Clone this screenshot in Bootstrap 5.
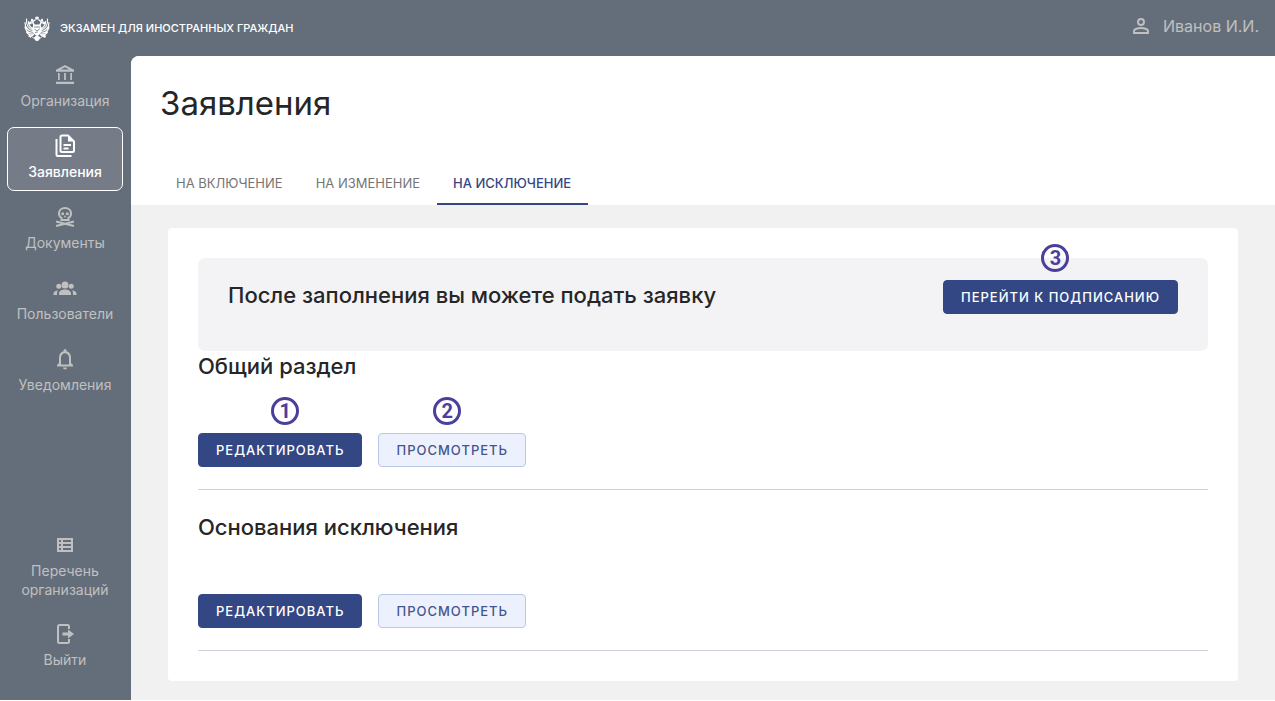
<!DOCTYPE html>
<html lang="ru">
<head>
<meta charset="utf-8">
<meta name="viewport" content="width=device-width, initial-scale=1">
<title>Экзамен для иностранных граждан</title>
<link href="https://cdn.jsdelivr.net/npm/bootstrap@5.3.0/dist/css/bootstrap.min.css" rel="stylesheet">
<style>
  :root { --slate: #646e7a; --navy: #334785; --muted: #c0c0c0; --ink: #262626; }
  body { font-family: Inter, "Noto Sans", sans-serif; color: var(--ink); background: #fff; }
  .shell { min-height: calc(100vh - 1px); background: var(--slate); }
  .topbar { height: 56px; padding: 0 16px 0 24px; }
  .brand-link { gap: 10px; color: #fff; font-size: 11px; font-weight: 500; }
  .brand-link svg { width: 26px; height: 26px; }
  .user-link { gap: 10px; padding-bottom: 4px; color: var(--muted); font-size: 16px; }
  .side { width: 131px; padding: 0 8px 21px 7px; }
  .side ul { gap: 7px; }
  .side-link { min-height: 64px; padding: 6px 0 8px; border: 1px solid transparent; border-radius: 7px; color: var(--muted); font-size: 14px; line-height: 19px; gap: 4px; }
  .side-link.active { color: #fff; background: #757c88; border-color: #fff; font-weight: 500; }
  .side-link svg, .user-link svg { width: 24px; height: 24px; }
  .main-area { background: #f1f1f1; border-top-left-radius: 8px; min-width: 0; }
  .page-head { background: #fff; border-top-left-radius: 8px; padding: 27px 29px 0; }
  .page-title { font-size: 33px; line-height: 40px; font-weight: 400; margin-bottom: 38px; }
  .tab-link { display: block; padding: 12px 17px 10px 16px; line-height: 20px; font-size: 13px; color: #757575; border-bottom: 2px solid transparent; text-decoration: none; }
  .tab-link.active { color: var(--navy); border-color: var(--navy); font-weight: 500; }
  .panel { margin: 23px 37px 18px; padding: 30px; background: #fff; border-radius: 4px; }
  .banner { min-height: 93px; padding: 22px 30px; background: #f3f3f6; border-radius: 7px; }
  .heading-md { font-size: 22px; line-height: 30px; font-weight: 500; margin: 0; }
  .block { padding-bottom: 22px; border-bottom: 1px solid #cfd2df; }
  .block + .block { padding-top: 22px; }
  .block .heading-md { margin-bottom: 52px; }
  .actions { gap: 16px; }
  .btn-act { height: 34px; padding: 0 17px; border-radius: 4px; font-size: 13px; font-weight: 500; letter-spacing: 1px; line-height: 32px; white-space: nowrap; }
  .btn-solid, .btn-solid:hover { background: var(--navy); border-color: var(--navy); color: #fff; }
  .btn-pale, .btn-pale:hover { background: #edf1fe; border-color: #bcc8e8; color: #44558c; }
  .step { position: absolute; top: -36px; left: 50%; width: 28px; height: 28px; margin-left: -19px; border: 3px solid #4b3f9b; border-radius: 50%; color: #4b3f9b; font: 700 20px/22px Roboto, sans-serif; text-align: center; }
  .step-first { margin-left: -9px; }
</style>
</head>
<body>
<div class="shell d-flex flex-column">
  <header class="topbar d-flex align-items-center justify-content-between">
    <a href="#" class="brand-link d-flex align-items-center text-decoration-none">
      <svg viewBox="0 0 52 52" fill="none" stroke="#fff" stroke-linecap="round">
        <path d="M22 3l2 2 2-3 2 3 2-2-1 6h-6zM14 7l2 2 2-2 1 5h-5zM34 12l0-5 2 2 2-2v5z" fill="#fff" stroke="none"/>
        <path d="M20 20c-1-4-2-6-5-6-2 0-4 1-5 3l4 0M32 20c1-4 2-6 5-6 2 0 4 1 5 3h-4M22 10l-4 3M30 10l4 3" stroke-width="2.6"/>
        <path d="M18 30C10 28 4 20 5 8M17 33C8 32 2 24 2 15M18 36C10 37 4 32 2 24M19 39c-6 2-11 0-14-5M17 27c-5-3-8-8-8-14M34 30c8-2 14-10 13-22M35 33c9-1 15-9 15-18M34 36c8 1 14-4 16-12M33 39c6 2 11 0 14-5M35 27c5-3 8-8 8-14" stroke-width="2.4"/>
        <path d="M19 19h14l3 9-3 9-7 5-7-5-3-9z" fill="#fff" stroke="none"/>
        <path d="M21 24h10M22 29l4 3 5-4M23 35l4-1" stroke="#646e7a" stroke-width="1.6"/>
        <path d="M20 39l-6 4-5-1M32 39l6 4 5-3M10 39l3 6M26 41l-5 4 1 4 4 3 4-3 1-4zM16 43l4 4M36 43l-4 4" fill="#fff" stroke-width="2"/>
        <circle cx="41" cy="43" r="2.5" fill="#fff" stroke="none"/>
      </svg>
      <span>ЭКЗАМЕН ДЛЯ ИНОСТРАННЫХ ГРАЖДАН</span>
    </a>
    <a href="#" class="user-link d-flex align-items-center text-decoration-none">
      <svg viewBox="0 0 24 24" fill="none" stroke="currentColor" stroke-width="1.9"><circle cx="12" cy="8" r="3"/><path d="M5 19v-2c0-2 4-3 7-3s7 1 7 3v2z"/></svg>
      <span>Иванов И.И.</span>
    </a>
  </header>
  <div class="d-flex flex-grow-1">
    <nav class="side d-flex flex-column justify-content-between flex-shrink-0" aria-label="Разделы">
      <ul class="list-unstyled d-flex flex-column m-0">
        <li><a href="#" class="side-link d-flex flex-column align-items-center text-center text-decoration-none">
          <svg viewBox="0 0 24 24" fill="currentColor"><path d="M6.700 10H5v7h1.700zM12.900 10h-1.800v7h1.800zM21 18.800H3v2.200h18zM19 10h-1.700v7H19zM12 4.300L16.200 6.500H7.800zM12 2L3 6.800V8.700h18V6.800z"/></svg>
          <span>Организация</span></a></li>
        <li><a href="#" class="side-link active d-flex flex-column align-items-center text-center text-decoration-none" aria-current="page">
          <svg viewBox="0 0 24 24" fill="none" stroke="currentColor" stroke-width="2"><path d="M15 1.500H9Q7.500 1.500 7.500 3v13.500Q7.500 18 9 18h10.500Q21 18 21 16.500V7.500z"/><path d="M15 1v6.500h6.500z" fill="currentColor" stroke="none"/><path d="M3.500 5v15.500Q3.500 22 5 22h13.500M10.500 11h7.500M10.500 14.500h5"/></svg>
          <span>Заявления</span></a></li>
        <li><a href="#" class="side-link d-flex flex-column align-items-center text-center text-decoration-none">
          <svg viewBox="0 0 24 24" fill="none" stroke="currentColor" stroke-width="2"><path d="M12 3c-3.500 0-6 2.200-6 5.400 0 2 1 3.600 2.500 4.500V15h7v-2.100C17 12 18 10.400 18 8.400 18 5.200 15.500 3 12 3z"/><circle cx="9.700" cy="8.700" r="1.500" fill="currentColor" stroke="none"/><circle cx="14.300" cy="8.700" r="1.500" fill="currentColor" stroke="none"/><path d="M12 10l-1.300 2.300h2.600z" fill="currentColor" stroke="none"/><path d="M3 16.500l18 4.500M21 16.500L3 21"/></svg>
          <span>Документы</span></a></li>
        <li><a href="#" class="side-link d-flex flex-column align-items-center text-center text-decoration-none">
          <svg viewBox="0 0 24 24" fill="currentColor"><circle cx="12" cy="9" r="3.500"/><circle cx="5.800" cy="10.300" r="2.500"/><circle cx="18.200" cy="10.300" r="2.500"/><path d="M6 19v-1.500c0-2.500 3-4 6-4s6 1.500 6 4V19zM.500 19v-1.300c0-1.800 1.800-3 4.400-3.200C4.200 15.400 4 16.300 4 17.500V19zM23.500 19v-1.300c0-1.800-1.800-3-4.400-3.200.7.900.9 1.800.9 3V19z"/></svg>
          <span>Пользователи</span></a></li>
        <li><a href="#" class="side-link d-flex flex-column align-items-center text-center text-decoration-none">
          <svg viewBox="0 0 24 24" fill="currentColor"><path d="M10 20.500h4a2 2 0 0 1-4 0M20 18v1.500H4V18l2-2v-5.500c0-3 1.700-5.500 4.500-6.200V3.500a1.500 1.500 0 0 1 3 0v.8c2.800.7 4.500 3.200 4.500 6.200V16zM16 10.500a4 4.300 0 0 0-8 0V17.500h8z"/></svg>
          <span>Уведомления</span></a></li>
      </ul>
      <ul class="list-unstyled d-flex flex-column m-0">
        <li><a href="#" class="side-link d-flex flex-column align-items-center text-center text-decoration-none">
          <svg viewBox="0 0 24 24" fill="currentColor" fill-rule="evenodd"><path d="M4 5h16v14H4zM6 7v2h2V7zM10 7v2h8V7zM6 11v2h2v-2zM10 11v2h8v-2zM6 15v2h2v-2zM10 15v2h8v-2z"/></svg>
          <span>Перечень организаций</span></a></li>
        <li><a href="#" class="side-link d-flex flex-column align-items-center text-center text-decoration-none">
          <svg viewBox="0 0 24 24" fill="none" stroke="currentColor" stroke-width="2"><path d="M16 7V4.500Q16 3 14.500 3h-8Q5 3 5 4.500v15Q5 21 6.500 21h8q1.500 0 1.500-1.500V17"/><path d="M9.500 10.500H15V7.500L21 12l-6 4.500v-3H9.500z" fill="currentColor" stroke="none"/></svg>
          <span>Выйти</span></a></li>
      </ul>
    </nav>
    <main class="main-area flex-grow-1">
      <div class="page-head">
        <h1 class="page-title">Заявления</h1>
        <ul class="list-unstyled d-flex m-0">
          <li><a href="#" class="tab-link">НА ВКЛЮЧЕНИЕ</a></li>
          <li><a href="#" class="tab-link">НА ИЗМЕНЕНИЕ</a></li>
          <li><a href="#" class="tab-link active" aria-current="page">НА ИСКЛЮЧЕНИЕ</a></li>
        </ul>
      </div>
      <div class="panel">
        <div class="banner d-flex justify-content-between align-items-start">
          <h2 class="heading-md">После заполнения вы можете подать заявку</h2>
          <div class="position-relative">
            <button type="button" class="btn btn-act btn-solid">ПЕРЕЙТИ К ПОДПИСАНИЮ</button>
            <span class="step">3</span>
          </div>
        </div>
        <section class="block">
          <h2 class="heading-md">Общий раздел</h2>
          <div class="actions d-flex">
            <div class="position-relative">
              <button type="button" class="btn btn-act btn-solid">РЕДАКТИРОВАТЬ</button>
              <span class="step step-first">1</span>
            </div>
            <div class="position-relative">
              <button type="button" class="btn btn-act btn-pale">ПРОСМОТРЕТЬ</button>
              <span class="step">2</span>
            </div>
          </div>
        </section>
        <section class="block">
          <h2 class="heading-md">Основания исключения</h2>
          <div class="actions d-flex">
            <button type="button" class="btn btn-act btn-solid">РЕДАКТИРОВАТЬ</button>
            <button type="button" class="btn btn-act btn-pale">ПРОСМОТРЕТЬ</button>
          </div>
        </section>
      </div>
    </main>
  </div>
</div>
<script src="https://cdn.jsdelivr.net/npm/bootstrap@5.3.0/dist/js/bootstrap.bundle.min.js"></script>
</body>
</html>
